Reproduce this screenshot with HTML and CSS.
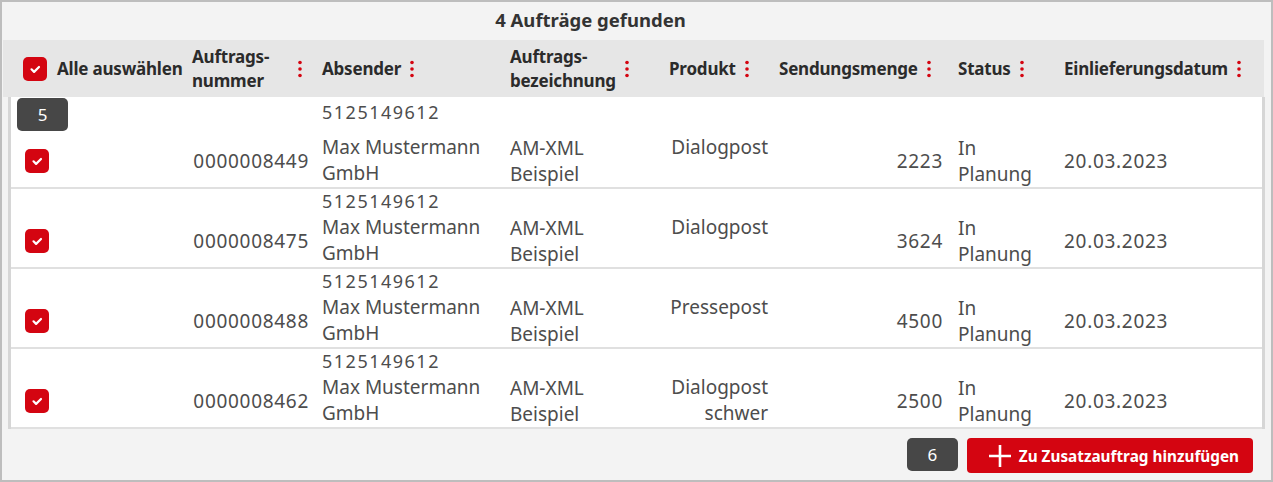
FILE: index.html
```html
<html>
<head>
	<meta charset="utf-8">
	<link rel="stylesheet" href="styles.css">
</head>
<body>
	<div class="panel">
		<div class="title">4 Aufträge gefunden</div>

		<div class="head">
			<div class="cell c-select">
				<svg class="check" viewBox="0 0 24 24"><rect width="24" height="24" rx="5"/><path d="M8.5 12.3l2.6 2.6 4.9-4.9"/></svg>
				<span>Alle auswählen</span>
			</div>
			<div class="cell c-number"><span class="label label-wide">Auftrags-<br>nummer</span><svg class="kebab" viewBox="0 0 4 18"><circle cx="2" cy="2.5" r="1.8"/><circle cx="2" cy="9" r="1.8"/><circle cx="2" cy="15.5" r="1.8"/></svg></div>
			<div class="cell c-sender"><span class="label">Absender</span><svg class="kebab" viewBox="0 0 4 18"><circle cx="2" cy="2.5" r="1.8"/><circle cx="2" cy="9" r="1.8"/><circle cx="2" cy="15.5" r="1.8"/></svg></div>
			<div class="cell c-name"><span class="label">Auftrags-<br>bezeichnung</span><svg class="kebab" viewBox="0 0 4 18"><circle cx="2" cy="2.5" r="1.8"/><circle cx="2" cy="9" r="1.8"/><circle cx="2" cy="15.5" r="1.8"/></svg></div>
			<div class="cell c-product"><span class="label">Produkt</span><svg class="kebab" viewBox="0 0 4 18"><circle cx="2" cy="2.5" r="1.8"/><circle cx="2" cy="9" r="1.8"/><circle cx="2" cy="15.5" r="1.8"/></svg></div>
			<div class="cell c-amount"><span class="label">Sendungsmenge</span><svg class="kebab" viewBox="0 0 4 18"><circle cx="2" cy="2.5" r="1.8"/><circle cx="2" cy="9" r="1.8"/><circle cx="2" cy="15.5" r="1.8"/></svg></div>
			<div class="cell c-status"><span class="label">Status</span><svg class="kebab" viewBox="0 0 4 18"><circle cx="2" cy="2.5" r="1.8"/><circle cx="2" cy="9" r="1.8"/><circle cx="2" cy="15.5" r="1.8"/></svg></div>
			<div class="cell c-date"><span class="label">Einlieferungsdatum</span><svg class="kebab" viewBox="0 0 4 18"><circle cx="2" cy="2.5" r="1.8"/><circle cx="2" cy="9" r="1.8"/><circle cx="2" cy="15.5" r="1.8"/></svg></div>
		</div>

		<div class="rows">
			<span class="badge badge-row">5</span>

			<div class="row row-first">
				<div class="cell c-select"><svg class="check" viewBox="0 0 24 24"><rect width="24" height="24" rx="5"/><path d="M8.5 12.3l2.6 2.6 4.9-4.9"/></svg></div>
				<div class="cell c-number num">0000008449</div>
				<div class="cell c-sender"><div class="sender-id">5125149612</div>Max Mustermann GmbH</div>
				<div class="cell c-name">AM-XML Beispiel</div>
				<div class="cell c-product">Dialogpost</div>
				<div class="cell c-amount num">2223</div>
				<div class="cell c-status">In Planung</div>
				<div class="cell c-date num">20.03.2023</div>
			</div>

			<div class="row">
				<div class="cell c-select"><svg class="check" viewBox="0 0 24 24"><rect width="24" height="24" rx="5"/><path d="M8.5 12.3l2.6 2.6 4.9-4.9"/></svg></div>
				<div class="cell c-number num">0000008475</div>
				<div class="cell c-sender"><div class="sender-id">5125149612</div>Max Mustermann GmbH</div>
				<div class="cell c-name">AM-XML Beispiel</div>
				<div class="cell c-product">Dialogpost</div>
				<div class="cell c-amount num">3624</div>
				<div class="cell c-status">In Planung</div>
				<div class="cell c-date num">20.03.2023</div>
			</div>

			<div class="row">
				<div class="cell c-select"><svg class="check" viewBox="0 0 24 24"><rect width="24" height="24" rx="5"/><path d="M8.5 12.3l2.6 2.6 4.9-4.9"/></svg></div>
				<div class="cell c-number num">0000008488</div>
				<div class="cell c-sender"><div class="sender-id">5125149612</div>Max Mustermann GmbH</div>
				<div class="cell c-name">AM-XML Beispiel</div>
				<div class="cell c-product">Pressepost</div>
				<div class="cell c-amount num">4500</div>
				<div class="cell c-status">In Planung</div>
				<div class="cell c-date num">20.03.2023</div>
			</div>

			<div class="row">
				<div class="cell c-select"><svg class="check" viewBox="0 0 24 24"><rect width="24" height="24" rx="5"/><path d="M8.5 12.3l2.6 2.6 4.9-4.9"/></svg></div>
				<div class="cell c-number num">0000008462</div>
				<div class="cell c-sender"><div class="sender-id">5125149612</div>Max Mustermann GmbH</div>
				<div class="cell c-name">AM-XML Beispiel</div>
				<div class="cell c-product">Dialogpost schwer</div>
				<div class="cell c-amount num">2500</div>
				<div class="cell c-status">In Planung</div>
				<div class="cell c-date num">20.03.2023</div>
			</div>
		</div>

		<div class="foot">
			<span class="badge">6</span>
			<button class="add">
				<svg class="plus" viewBox="0 0 24 24"><path d="M12 1v22M1 12h22"/></svg>
				Zu Zusatzauftrag hinzufügen
			</button>
		</div>
	</div>
</body>
</html>
```

FILE: styles.css
```css
body				{ margin: 0; padding: 0; font-family: "Noto Sans", sans-serif; }
.panel				{ width: 1273px; height: 482px; box-sizing: border-box;
					  border: 2px solid #bdbdbd; background: #f3f3f3;
					  display: flex; flex-direction: column; }

.title				{ height: 38px; line-height: 36px; text-align: center; padding-right: 92px;
					  font-size: 18.5px; font-weight: bold; color: #333; }

/* header row */
.head				{ display: grid; height: 57px; margin: 0 7px 0 1px; background: #e6e6e6;
					  grid-template-columns: 182px 130px 185px 155px 115px 180px 105px 209px;
					  align-items: center;
					  font-size: 17px; font-weight: bold; line-height: 24px; letter-spacing: -0.2px; color: #2b2b2b; }
.head .cell			{ display: flex; align-items: center; gap: 9px; }
.head .label-wide	{ width: 97px; }
.kebab				{ width: 4px; height: 18px; fill: #d40511; flex: none; }

.head .c-select		{ padding-left: 20px; gap: 10px; }
.head .c-number		{ padding-left: 7px; }
.head .c-sender		{ padding-left: 7px; }
.head .c-name		{ padding-left: 10px; }
.head .c-product	{ padding-left: 14px; }
.head .c-amount		{ padding-left: 9px; }
.head .c-status		{ padding-left: 8px; }
.head .c-date		{ padding-left: 9px; }

.check				{ width: 24px; height: 24px; flex: none; display: block; }
.check rect			{ fill: #d40511; }
.check path			{ fill: none; stroke: #fff; stroke-width: 2.2; stroke-linecap: round; stroke-linejoin: round; }

/* body rows */
.rows				{ position: relative; margin: 0 6px 0 6px; background: #fff;
					  border-left: 3px solid #d6d6d6; border-right: 3px solid #d6d6d6; }
.row				{ display: grid; height: 80px; box-sizing: border-box; padding-top: 25px;
					  grid-template-columns: 174px 130px 185px 155px 115px 180px 105px 207px;
					  align-items: center; border-bottom: 2px solid #e0e0e0;
					  font-size: 19px; line-height: 26px; color: #4d4d4d; }
.row-first			{ height: 92px; padding-top: 37px; }

.row .c-select		{ padding-left: 14px; }
.row .c-number		{ text-align: right; padding-right: 6px; }
.row .c-sender		{ padding-left: 7px; align-self: start; margin-top: -25px; }
.row-first .c-sender { margin-top: -37px; }
.row .c-name		{ padding: 0 15px 0 10px; }
.row .c-product		{ padding: 0 2px 0 14px; text-align: right; align-self: start; }
.row .c-amount		{ text-align: right; padding-right: 7px; }
.row .c-status		{ padding: 0 15px 0 8px; }
.row .c-date		{ padding-left: 9px; }
.num				{ letter-spacing: 0.7px; white-space: nowrap; }

.sender-id			{ font-size: 18px; line-height: 25px; letter-spacing: 1.5px; }
.row-first .sender-id { padding-top: 3px; margin-bottom: 9px; }

/* numbered callouts */
.badge				{ display: inline-flex; align-items: center; justify-content: center;
					  width: 51px; height: 33px; border-radius: 5px; background: #474747;
					  color: #fff; font-size: 17px; }
.badge-row			{ position: absolute; left: 6px; top: 1px; z-index: 1; }

/* footer */
.foot				{ flex: 1; display: flex; justify-content: flex-end; align-items: flex-start;
					  gap: 9px; padding: 9px 18px 0 0; }
.add				{ display: flex; align-items: center; gap: 7px; height: 35px; padding: 0 14px 0 21px;
					  border: 0; border-radius: 4px; background: #d40511; color: #fff;
					  font-family: "Noto Sans", sans-serif; font-size: 15.3px; font-weight: bold; }
.plus				{ width: 24px; height: 24px; }
.plus path			{ stroke: #fff; stroke-width: 2.6; fill: none; }
```
